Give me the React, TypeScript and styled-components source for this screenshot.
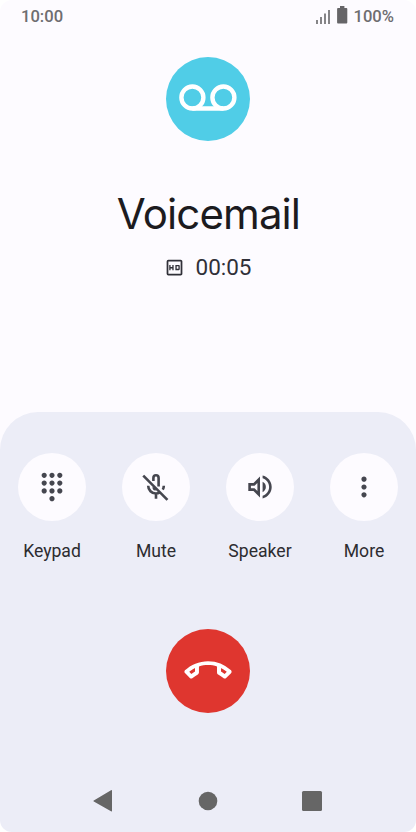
import { ReactNode } from "react";
import styled, { createGlobalStyle } from "styled-components";
import {
  MdDialpad,
  MdMoreVert,
  MdOutlineCallEnd,
  MdOutlineHd,
  MdOutlineVolumeUp,
} from "react-icons/md";

const GlobalStyle = createGlobalStyle`
  * {
    box-sizing: border-box;
  }
  body {
    margin: 0;
    background: #ffffff;
  }
`;

const Screen = styled.main`
  width: 416px;
  height: 832px;
  display: flex;
  flex-direction: column;
  overflow: hidden;
  background: #fdfbff;
  border-radius: 12px;
  color: #1c1b1f;
  font-family: Roboto, sans-serif;
`;

const StatusBar = styled.header`
  height: 34px;
  display: flex;
  justify-content: space-between;
  padding: 7px 22px 0 21px;
  color: #6e6d70;
  font-size: 16.6px;
  font-weight: 500;
  line-height: 20px;
`;

const StatusIcons = styled.div`
  display: flex;
  gap: 5px;
`;

const StatusGraphic = styled.svg`
  width: 32px;
  height: 20px;
  margin-top: -1px;
`;

const CallInfo = styled.section`
  height: 378px;
  display: flex;
  flex-direction: column;
  align-items: center;
  padding-top: 23px;
`;

const RoundBadge = styled.div<{ $color: string }>`
  width: 84px;
  height: 84px;
  display: flex;
  align-items: center;
  justify-content: center;
  border-radius: 50%;
  background: ${({ $color }) => $color};
  color: #ffffff;
`;

const Name = styled.h1`
  margin: 47px 0 0;
  padding-left: 1px;
  font-family: Inter, sans-serif;
  font-size: 42px;
  font-weight: 380;
  line-height: 52px;
  letter-spacing: -0.9px;
`;

const Timer = styled.div`
  display: flex;
  align-items: center;
  gap: 10px;
  margin-top: 15px;
  color: #303038;
  font-size: 22.5px;
  line-height: 25px;
`;

const Panel = styled.section`
  flex: 1;
  display: flex;
  flex-direction: column;
  align-items: center;
  padding-top: 41px;
  background: #ecedf7;
  border-radius: 38px 38px 0 0;
`;

const Actions = styled.div`
  width: 100%;
  display: grid;
  grid-template-columns: repeat(4, 1fr);
`;

const Action = styled.button`
  display: flex;
  flex-direction: column;
  align-items: center;
  gap: 18px;
  padding: 0;
  border: 0;
  background: none;
  color: #2c2c30;
  font: 400 17.6px/24px Roboto, sans-serif;
`;

const ActionIcon = styled.span`
  width: 68px;
  height: 68px;
  display: flex;
  align-items: center;
  justify-content: center;
  border-radius: 50%;
  background: #fdfbff;
  color: #45464f;
`;

const EndCall = styled.div`
  margin-top: 66px;
`;

const NavBar = styled.nav`
  display: flex;
  gap: 80px;
  margin-top: auto;
  padding-bottom: 19px;
`;

const NavIcon = styled.svg`
  width: 24px;
  height: 24px;
  fill: #666666;
`;

const iconBox = "-0.3 -0.3 24.6 24.6";

const MicOffIcon = () => (
  <svg width="32" height="32" viewBox={iconBox} fill="none" stroke="currentColor" strokeWidth="2">
    <path d="M2.2 3.3 20.8 21.9" />
    <path d="M10 7.4V5a2 2 0 0 1 4 0v6.6" />
    <path d="M6 11a6 6 0 0 0 6 6q1.6 0 3-.8M18 11q0 1.6-.8 3M12 17v4" />
    <path d="M10 12.2q.3 1.4 1.9 1.8" />
  </svg>
);

const actions: { label: string; icon: ReactNode }[] = [
  { label: "Keypad", icon: <MdDialpad size={32} viewBox={iconBox} /> },
  { label: "Mute", icon: <MicOffIcon /> },
  { label: "Speaker", icon: <MdOutlineVolumeUp size={32} viewBox={iconBox} /> },
  { label: "More", icon: <MdMoreVert size={32} viewBox={iconBox} /> },
];

const VoicemailIcon = () => (
  <svg width="60" height="30" viewBox="0 0 60 30" fill="none" stroke="#fff" strokeWidth="4.4">
    <circle cx="14.4" cy="13.5" r="11" />
    <circle cx="45.4" cy="13.5" r="11" />
    <path d="M14.4 24.5h31" />
  </svg>
);

const App = () => {
  return (
    <>
      <GlobalStyle />
      <Screen>
        <StatusBar>
          <span>10:00</span>
          <StatusIcons>
            <StatusGraphic viewBox="0 0 32 20">
              <path
                fill="#858487"
                d="M0 14h2v4H0zM4 11h2v7H4zM8 7.5h2V18H8zM12 4h2v14h-2z"
              />
              <path
                fill="#666568"
                d="M24 0h4.400v2h2q.9 0 .9.9v13.700q0 .9-.9.9h-8.400q-.9 0-.9-.9V2.900q0-.9.9-.9h2z"
              />
            </StatusGraphic>
            <span>100%</span>
          </StatusIcons>
        </StatusBar>
        <CallInfo>
          <RoundBadge $color="#50cde7">
            <VoicemailIcon />
          </RoundBadge>
          <Name>Voicemail</Name>
          <Timer>
            <MdOutlineHd size={21} />
            <span>00:05</span>
          </Timer>
        </CallInfo>
        <Panel>
          <Actions>
            {actions.map((action) => (
              <Action key={action.label}>
                <ActionIcon>{action.icon}</ActionIcon>
                {action.label}
              </Action>
            ))}
          </Actions>
          <EndCall>
            <RoundBadge $color="#df362f">
              <MdOutlineCallEnd size={48} viewBox="-0.2 -0.2 24.4 24.4" />
            </RoundBadge>
          </EndCall>
          <NavBar>
            <NavIcon viewBox="0 0 24 24">
              <path d="M20 1.7v20q0 1.2-1 .6L1.8 12.6q-1-.6 0-1.2L19 1.300q1-.6 1 .4z" />
            </NavIcon>
            <NavIcon viewBox="0 0 24 24">
              <circle cx="12" cy="12" r="9.3" />
            </NavIcon>
            <NavIcon viewBox="0 0 24 24">
              <rect x="2" y="2" width="20" height="20" rx="1.5" />
            </NavIcon>
          </NavBar>
        </Panel>
      </Screen>
    </>
  );
};

export default App;
